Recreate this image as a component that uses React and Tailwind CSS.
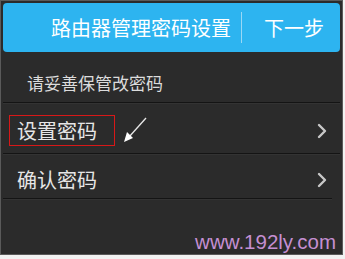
import React from 'react';

const cjk = { fontFamily: '"Noto Sans CJK SC", "Noto Sans", sans-serif' };

const Chevron = () => (
    <svg width="12" height="16" viewBox="0 0 12 16" className="shrink-0">
        <polyline points="3,2 9,8 3,14" fill="none" stroke="#c8c8c8" strokeWidth="2.4" strokeLinecap="round" strokeLinejoin="round" />
    </svg>
);

const Sep = ({ short }) => (
    <div className={`h-[2px] bg-[#141414] border-b border-[#333] ${short ? 'mr-[8px]' : ''}`} />
);

const App = () => {
    return (
        <div className="w-[345px] h-[259px] bg-[#f2f2f2] relative overflow-hidden" style={cjk}>
            <div className="w-[343px] h-[255px] border border-[#5a5a5a] bg-[#2b2b2b] p-[2px] flex flex-col relative">
                <div className="h-[49px] shrink-0 rounded-[4px] bg-[#2db4f0] flex items-center justify-end pr-[16px]">
                    <span className="text-white text-[20px] leading-none">路由器管理密码设置</span>
                    <div className="w-px h-[31px] bg-[#9ad8f5] ml-[10px] mr-[22px]" />
                    <span className="text-white text-[20px] leading-none">下一步</span>
                </div>

                <div className="h-[50px] shrink-0 flex items-center pt-[10px] pl-[24px]">
                    <span className="text-[#dcdcdc] text-[17px] leading-none">请妥善保管改密码</span>
                </div>
                <Sep />

                <div className="h-[49px] shrink-0 flex items-center pt-[5px] pl-[14px] pr-[12px] justify-between">
                    <span className="relative text-[#e6e6e6] text-[20px] leading-none">
                        设置密码
                        <span className="absolute left-[-8px] top-[-6px] w-[106px] h-[31px] border border-[#d81818]" />
                    </span>
                    <Chevron />
                </div>
                <Sep />

                <div className="h-[43px] shrink-0 flex items-center pt-[7px] pl-[14px] pr-[12px] justify-between">
                    <span className="text-[#e6e6e6] text-[20px] leading-none">确认密码</span>
                    <Chevron />
                </div>
                <Sep short />

                <svg className="absolute left-[118px] top-[112px]" width="32" height="34" viewBox="0 0 32 34">
                    <line x1="27" y1="5" x2="10" y2="24" stroke="#e8e8e8" strokeWidth="1.3" />
                    <polygon points="5,29 8,19 14,25" fill="#ffffff" />
                </svg>

                <span
                    className="absolute right-[6px] top-[231px] text-[20.5px] leading-[20px] text-[#c58fd2]"
                    style={{ fontFamily: '"Liberation Sans", Arial, sans-serif' }}
                >
                    www.192ly.com
                </span>
            </div>
        </div>
    );
};

export default App;
